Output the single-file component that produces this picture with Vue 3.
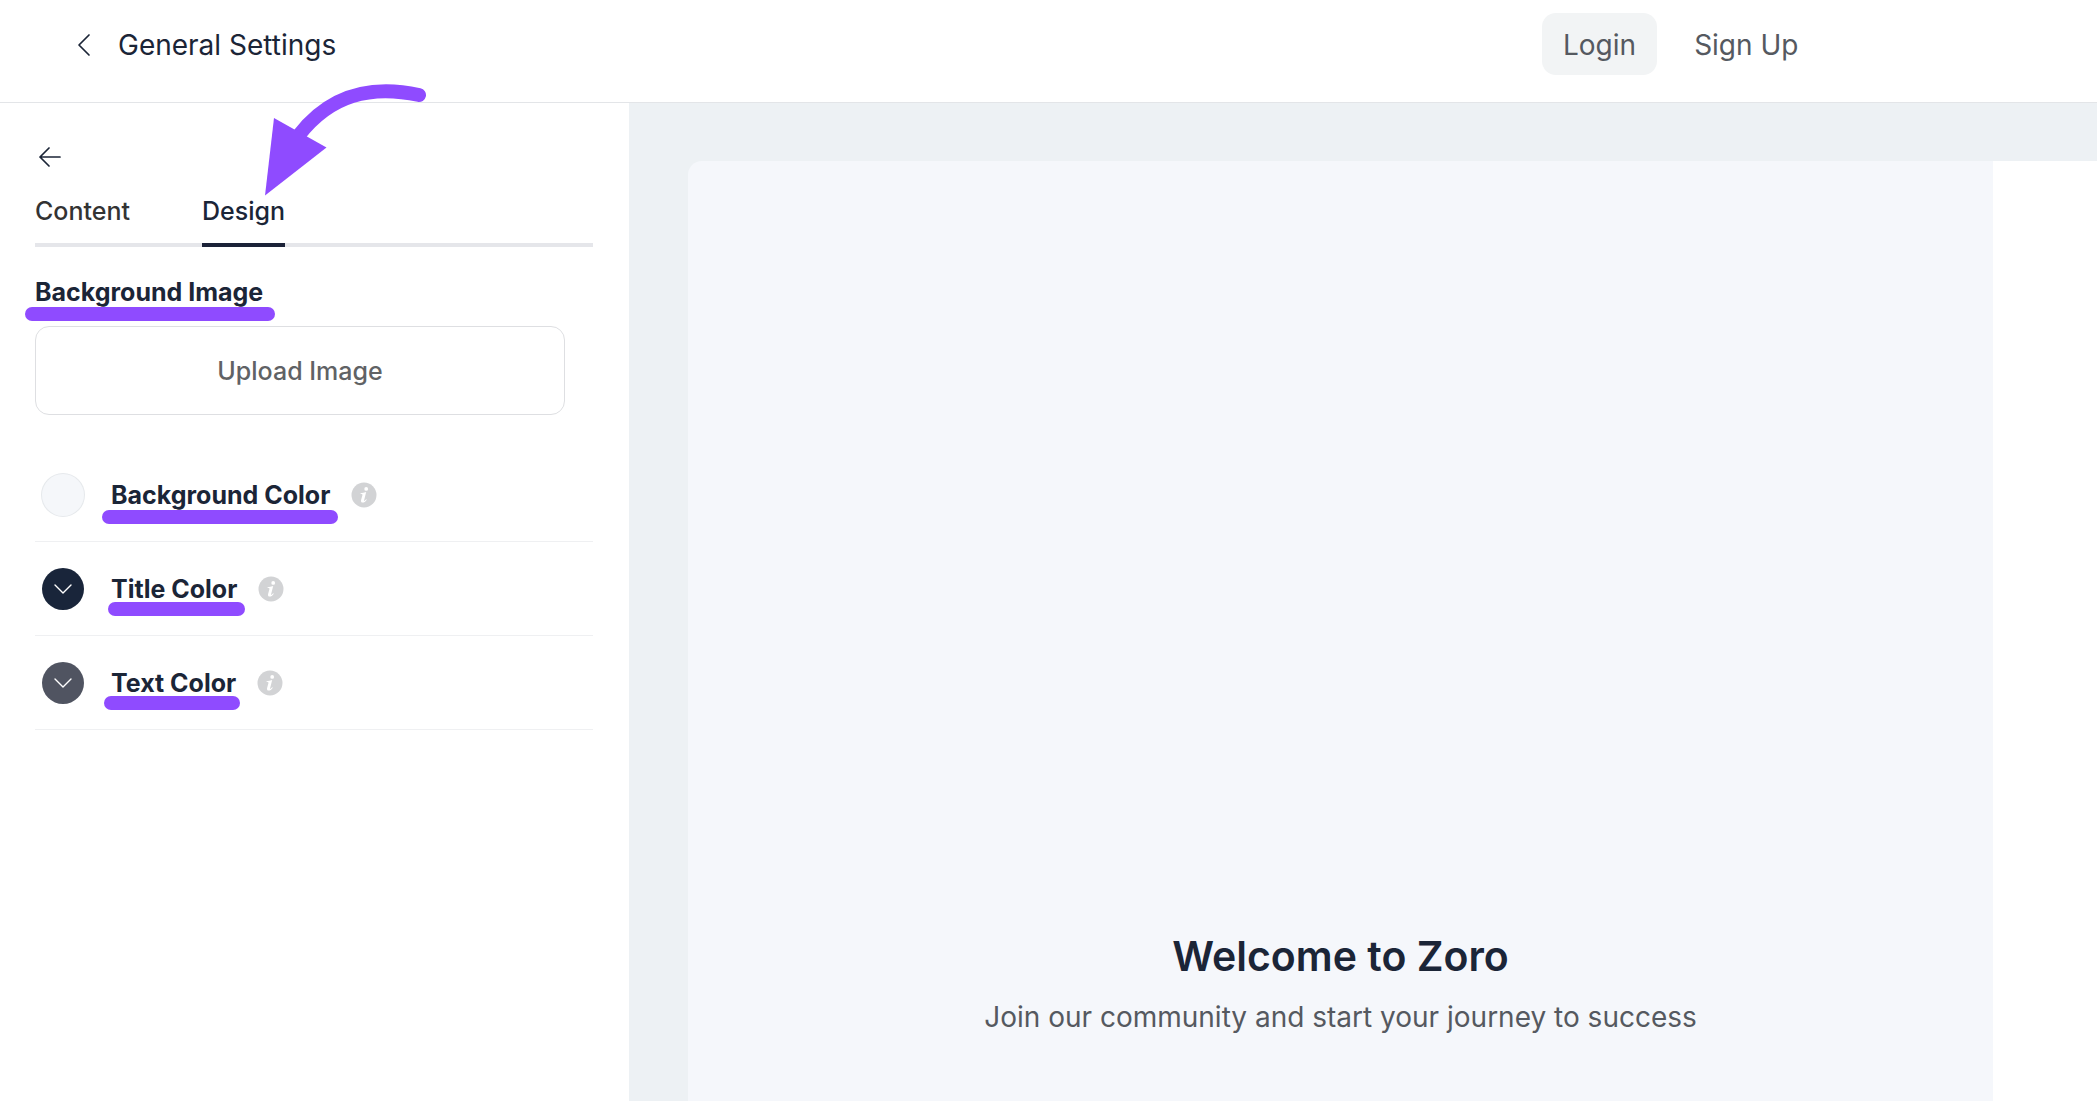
<template>
  <div class="page">
    <header class="topbar">
      <div class="heading">
        <button class="icon-btn" type="button" aria-label="Back to settings">
          <svg width="14" height="24" viewBox="0 0 14 24"><path d="M12 2 2 12l10 10" /></svg>
        </button>
        <h1>General Settings</h1>
      </div>
      <nav class="switcher">
        <button
          v-for="view in views"
          :key="view"
          type="button"
          class="view"
          :class="{ active: view === activeView }"
          @click="activeView = view"
        >{{ view }}</button>
      </nav>
    </header>

    <main class="body">
      <aside class="sidebar">
        <button class="icon-btn back" type="button" aria-label="Back">
          <svg width="22" height="20" viewBox="0 0 22 20"><path d="M10 1 1 10l9 9M1 10h20" /></svg>
        </button>

        <div class="tabs" role="tablist">
          <button
            v-for="tab in tabs"
            :key="tab"
            type="button"
            role="tab"
            class="tab"
            :class="{ active: tab === activeTab }"
            :aria-selected="tab === activeTab"
            @click="activeTab = tab"
          >{{ tab }}</button>
        </div>

        <h2 class="label image-label">Background Image<span class="marker wide"></span></h2>
        <button class="upload" type="button">Upload Image</button>

        <ul class="colors">
          <li v-for="c in colors" :key="c.label" class="color-row">
            <button
              type="button"
              class="swatch"
              :class="{ light: c.light }"
              :style="{ backgroundColor: c.value }"
              :aria-label="c.label"
            >
              <svg v-if="!c.light" width="18" height="10" viewBox="0 0 18 10"><path d="m1 1 8 8 8-8" /></svg>
            </button>
            <span class="label">{{ c.label }}<span class="marker" :class="c.marker"></span></span>
            <svg class="info" width="26" height="26" viewBox="0 0 26 26">
              <circle cx="13" cy="13" r="12.5" />
              <circle class="ink" cx="15.2" cy="6.9" r="1.9" />
              <path class="ink" d="M9.6 11.2c1.8-.2 3.7-.6 5.6-1.1l-2.1 8.2c-.2.8.3.8.8.3l1.3-1.4.6.5c-1.3 1.9-2.7 2.9-4.1 2.9-1.5 0-2-1.1-1.6-2.6l1.3-4.8c.2-.9 0-1.2-1.9-1.3z" />
            </svg>
          </li>
        </ul>
      </aside>

      <section class="stage">
        <div class="preview">
          <h2>Welcome to Zoro</h2>
          <p>Join our community and start your journey to success</p>
        </div>
        <div class="form-side"></div>
      </section>
    </main>

    <svg class="arrow" width="170" height="120" viewBox="260 80 170 120" aria-hidden="true">
      <path class="shaft" d="M299 135C330 95 370 84.500 419 95" />
      <path class="head" d="M265 195.500 274 118 326.500 147.500z" />
    </svg>
  </div>
</template>

<script setup>
import { ref } from 'vue';

const views = ['Login', 'Sign Up'];
const activeView = ref('Login');

const tabs = ['Content', 'Design'];
const activeTab = ref('Design');

const colors = [
  { label: 'Background Color', value: '#f5f7fa', light: true },
  { label: 'Title Color', value: '#19253a', marker: 'inset' },
  { label: 'Text Color', value: '#505461', marker: 'close' }
];
</script>

<style>
body{ margin:0; background:#fff; }
</style>

<style scoped>
.page{
  position:relative; min-height:100vh; display:flex; flex-direction:column;
  font-family:Inter, "Liberation Sans", sans-serif; color:#1b2537;
}
h1, h2, p, ul{ margin:0; padding:0; }
button{ font:inherit; color:inherit; background:none; border:0; padding:0; cursor:pointer; }
svg{ display:block; fill:none; stroke-linecap:round; stroke-linejoin:round; }

.topbar{
  display:grid; grid-template-columns:1fr 555px; align-items:start;
  height:102px; border-bottom:1px solid #e3e5e8;
}
.heading{ display:flex; align-items:center; gap:27px; height:90px; padding-left:77px; }
.heading h1{ font-size:28px; line-height:36px; font-weight:400; }
.icon-btn svg{ stroke:#1b2537; stroke-width:1.7; }
.switcher{ display:flex; gap:16px; padding-top:13px; }
.view{
  height:62px; padding:2px 21px 0; border-radius:14px;
  font-size:28px; line-height:36px; color:#555960;
}
.view.active{ background:#f2f4f5; }

.body{ flex:1; display:flex; }
.sidebar{ width:558px; padding:44px 36px 0 35px; flex:none; }
.back{ display:block; margin-left:4px; }
.tabs{ display:flex; gap:72px; margin-top:20px; border-bottom:4px solid #e5e6ea; }
.tab{
  height:60px; margin-bottom:-4px; padding-bottom:8px; border-bottom:4px solid transparent;
  font-size:25px; line-height:32px; font-weight:500; color:#333;
}
.tab.active{ color:#1b2537; border-color:#1b2238; }

.label{ position:relative; font-size:25px; line-height:32px; font-weight:700; white-space:nowrap; }
.image-label{ width:fit-content; margin-top:29px; }
.marker{
  position:absolute; left:-9px; right:-8px; top:31px; height:14px;
  border-radius:7px; background:#8f4bff;
}
.marker.wide{ left:-10px; right:-12px; }
.marker.inset{ left:-3px; top:29px; }
.marker.close{ left:-7px; right:-4px; top:29px; }
.upload{
  display:block; width:calc(100% - 28px); height:89px; margin-top:18px;
  border:1px solid #dedfe2; border-radius:14px;
  font-size:25px; font-weight:500; color:#606265;
}

.colors{ list-style:none; margin-top:33px; }
.color-row{
  display:flex; align-items:center; height:93px; padding-left:7px;
  border-bottom:1px solid #eff0f2;
}
.swatch{
  width:42px; height:42px; margin-right:27px; border-radius:50%;
  display:grid; place-items:center;
}
.swatch.light{ box-shadow:0 0 0 1px #e6e9ec; }
.swatch svg{ stroke:#fff; stroke-width:1.4; }
.info{ margin-left:21px; fill:#d2d3d5; }
.info .ink{ fill:#fff; }

.stage{
  flex:1; display:grid; grid-template-columns:1fr 104px;
  padding:58px 0 0 59px; background:#edf1f4;
}
.preview{
  display:flex; flex-direction:column; justify-content:flex-end; align-items:center;
  gap:17px; padding-bottom:66px; border-radius:14px 0 0 0; background:#f5f7fb; text-align:center;
}
.preview h2{ font-size:41px; line-height:52px; font-weight:600; }
.preview p{ font-size:28px; line-height:36px; color:#555960; }
.form-side{ background:#fff; }

.arrow{ position:absolute; left:260px; top:80px; pointer-events:none; }
.arrow .shaft{ stroke:#8f4bff; stroke-width:14; }
.arrow .head{ fill:#8f4bff; }
</style>
